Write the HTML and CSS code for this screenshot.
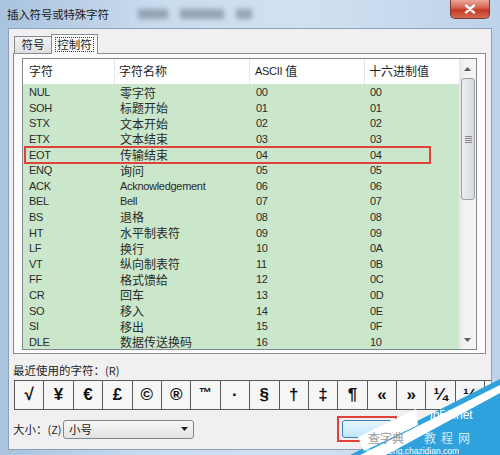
FILE: index.html
```html
<!DOCTYPE html>
<html lang="zh-CN">
<head>
<meta charset="utf-8">
<title>插入符号或特殊字符</title>
<link rel="stylesheet" href="styles.css">
</head>
<body>
<div class="window">
  <div class="titlebar">
    <span class="title">插入符号或特殊字符</span>
    <span class="smudge s1"></span>
    <span class="smudge s2"></span>
    <span class="smudge s3"></span>
    <div class="close">
      <svg width="14" height="10" viewBox="0 0 14 10"><path d="M3 1.5 L11 8.5 M11 1.5 L3 8.5" stroke="#fff" stroke-width="2.4" stroke-linecap="round"/></svg>
    </div>
  </div>
  <div class="client">
    <div class="tabs">
      <div class="tab">符号</div>
      <div class="tab active"><span class="focus">控制符</span></div>
    </div>
    <div class="panel">
      <div class="list">
        <div class="table">
          <div class="row head">
            <div class="c c1">字符</div>
            <div class="c c2">字符名称</div>
            <div class="c c3"><span class="lat">ASCII</span> 值</div>
            <div class="c c4">十六进制值</div>
          </div>
          <div class="rows">
            <div class="row"><div class="c c1 lat">NUL</div><div class="c c2">零字符</div><div class="c c3 lat">00</div><div class="c c4 lat">00</div></div>
            <div class="row"><div class="c c1 lat">SOH</div><div class="c c2">标题开始</div><div class="c c3 lat">01</div><div class="c c4 lat">01</div></div>
            <div class="row"><div class="c c1 lat">STX</div><div class="c c2">文本开始</div><div class="c c3 lat">02</div><div class="c c4 lat">02</div></div>
            <div class="row"><div class="c c1 lat">ETX</div><div class="c c2">文本结束</div><div class="c c3 lat">03</div><div class="c c4 lat">03</div></div>
            <div class="row"><div class="c c1 lat">EOT</div><div class="c c2">传输结束</div><div class="c c3 lat">04</div><div class="c c4 lat">04</div></div>
            <div class="row"><div class="c c1 lat">ENQ</div><div class="c c2">询问</div><div class="c c3 lat">05</div><div class="c c4 lat">05</div></div>
            <div class="row"><div class="c c1 lat">ACK</div><div class="c c2 lat">Acknowledgement</div><div class="c c3 lat">06</div><div class="c c4 lat">06</div></div>
            <div class="row"><div class="c c1 lat">BEL</div><div class="c c2 lat">Bell</div><div class="c c3 lat">07</div><div class="c c4 lat">07</div></div>
            <div class="row"><div class="c c1 lat">BS</div><div class="c c2">退格</div><div class="c c3 lat">08</div><div class="c c4 lat">08</div></div>
            <div class="row"><div class="c c1 lat">HT</div><div class="c c2">水平制表符</div><div class="c c3 lat">09</div><div class="c c4 lat">09</div></div>
            <div class="row"><div class="c c1 lat">LF</div><div class="c c2">换行</div><div class="c c3 lat">10</div><div class="c c4 lat">0A</div></div>
            <div class="row"><div class="c c1 lat">VT</div><div class="c c2">纵向制表符</div><div class="c c3 lat">11</div><div class="c c4 lat">0B</div></div>
            <div class="row"><div class="c c1 lat">FF</div><div class="c c2">格式馈给</div><div class="c c3 lat">12</div><div class="c c4 lat">0C</div></div>
            <div class="row"><div class="c c1 lat">CR</div><div class="c c2">回车</div><div class="c c3 lat">13</div><div class="c c4 lat">0D</div></div>
            <div class="row"><div class="c c1 lat">SO</div><div class="c c2">移入</div><div class="c c3 lat">14</div><div class="c c4 lat">0E</div></div>
            <div class="row"><div class="c c1 lat">SI</div><div class="c c2">移出</div><div class="c c3 lat">15</div><div class="c c4 lat">0F</div></div>
            <div class="row"><div class="c c1 lat">DLE</div><div class="c c2">数据传送换码</div><div class="c c3 lat">16</div><div class="c c4 lat">10</div></div>
          </div>
        </div>
        <div class="scrollbar">
          <div class="arrow up">
            <svg width="7" height="4" viewBox="0 0 7 4"><path d="M0 4 L3.5 0 L7 4 Z" fill="#5c5c5c"/></svg>
          </div>
          <div class="track">
            <div class="thumb"><span class="grip"></span></div>
          </div>
          <div class="arrow down">
            <svg width="7" height="4" viewBox="0 0 7 4"><path d="M0 0 L3.5 4 L7 0 Z" fill="#5c5c5c"/></svg>
          </div>
        </div>
        <div class="redbox"></div>
      </div>
    </div>
    <div class="recent-label">最近使用的字符：<span class="key">(R)</span></div>
    <div class="recent">
      <div class="cell">√</div>
      <div class="cell">¥</div>
      <div class="cell">€</div>
      <div class="cell">£</div>
      <div class="cell">©</div>
      <div class="cell">®</div>
      <div class="cell tm">™</div>
      <div class="cell">·</div>
      <div class="cell">§</div>
      <div class="cell">†</div>
      <div class="cell">‡</div>
      <div class="cell">¶</div>
      <div class="cell">«</div>
      <div class="cell">»</div>
      <div class="cell">¼</div>
      <div class="cell">½</div>
      <div class="cell"></div>
    </div>
    <div class="bottom">
      <span class="size-label">大小：<span class="key">(Z)</span></span>
      <div class="select">
        <span>小号</span>
        <svg width="7" height="4" viewBox="0 0 7 4"><path d="M0 0 L3.5 4 L7 0 Z" fill="#222"/></svg>
      </div>
      <div class="btn-mark"><div class="btn"></div></div>
    </div>
  </div>
  <svg class="watermark" width="150" height="80" viewBox="0 0 150 80">
    <polygon points="0,80 150,4 150,80" fill="#2fa2de"/>
    <polygon points="10,80 150,10 150,18 36,80" fill="#ffffff"/>
    <polygon points="8,62 66,34 68,50 14,76" fill="#ffffff"/>
    <text x="80" y="44" fill="#ffffff" font-family="Liberation Sans, sans-serif" font-size="12">jb51.net</text>
    <text x="18" y="68" fill="#9a9a9a" font-family="Noto Sans CJK SC, sans-serif" font-size="12">查字典</text>
    <text x="74" y="68" fill="#d4eaf7" font-family="Noto Sans CJK SC, sans-serif" font-size="12" letter-spacing="5">教程网</text>
    <text x="16" y="79" fill="#ffffff" font-family="Liberation Sans, sans-serif" font-size="8.5">jiaocheng.chazidian.com</text>
  </svg>
</div>
</body>
</html>
```
FILE: styles.css
```css
* { box-sizing: border-box; }
html, body { margin: 0; padding: 0; }
body {
  width: 500px;
  height: 455px;
  overflow: hidden;
  font-family: "Noto Sans CJK SC", "Liberation Sans", sans-serif;
  font-size: 12px;
  color: #222;
}
.window {
  position: relative;
  width: 500px;
  height: 455px;
  background: linear-gradient(90deg, #a9c3de 0%, #c9dbee 30%, #d2e1f1 60%, #bcd3ea 100%);
  display: flex;
  flex-direction: column;
}
.titlebar {
  position: relative;
  height: 28px;
  flex: none;
  display: flex;
  align-items: center;
  padding-left: 7px;
}
.title {
  font-size: 11.5px;
  color: #1a1a1a;
  letter-spacing: -0.2px;
}
.smudge {
  position: absolute;
  top: 9px;
  height: 10px;
  background: #7d8b99;
  filter: blur(2.5px);
  opacity: 0.7;
}
.s1 { left: 138px; width: 30px; }
.s2 { left: 180px; width: 44px; }
.s3 { left: 236px; width: 16px; }
.close {
  position: absolute;
  right: 10px;
  top: 0;
  width: 40px;
  height: 19px;
  border: 1px solid #7a3a33;
  border-top: none;
  border-radius: 0 0 5px 5px;
  background: linear-gradient(180deg, #e9a79a 0%, #d4604e 45%, #c23a25 55%, #d76b53 100%);
  display: flex;
  align-items: center;
  justify-content: center;
}
.client {
  margin: 0 8px;
  height: 422px;
  background: #f0f0f0;
  border: 1px solid #8c9fb6;
  padding: 4px 0 0 4px;
  display: flex;
  flex-direction: column;
}
.tabs {
  display: flex;
  align-items: flex-end;
  height: 20px;
  padding-left: 1px;
}
.tab {
  height: 17px;
  width: 38px;
  border: 1px solid #898c95;
  border-bottom: none;
  background: linear-gradient(180deg, #f2f2f2, #dedede);
  display: flex;
  align-items: center;
  justify-content: center;
  font-size: 11.5px;
  line-height: 1;
  color: #222;
}
.tab.active {
  height: 20px;
  width: 47px;
  background: #fcfcfc;
  margin-left: -1px;
  position: relative;
  top: 1px;
  z-index: 2;
}
.focus {
  border: 1px dotted #333;
  padding: 0 1px;
  line-height: 13px;
}
.panel {
  width: 473px;
  height: 301px;
  border: 1px solid #898c95;
  background: #fcfcfc;
  padding: 4px 7px 3px 8px;
}
.list {
  position: relative;
  width: 455px;
  height: 292px;
  border: 1px solid #828790;
  background: #fff;
  display: flex;
}
.table {
  width: 436px;
  display: flex;
  flex-direction: column;
}
.row {
  display: flex;
  height: 15.6px;
  align-items: center;
}
.row.head {
  height: 25px;
  background: #fff;
  color: #1e1e1e;
}
.rows {
  background: #cbe7cb;
  color: #2a2a2a;
  flex: 1;
}
.rows .row { padding-top: 2px; }
.c {
  padding-left: 6px;
  white-space: nowrap;
  line-height: 1;
  height: 100%;
  display: flex;
  align-items: center;
}
.c1 { width: 92px; }
.c2 { width: 135px; padding-left: 5px; }
.c3 { width: 115px; }
.c4 { width: 94px; padding-left: 5px; }
.head .c1, .head .c2, .head .c3 { border-right: 1px solid #e4e6ea; }
.head .c2 { padding-left: 4px; }
.head .c3 { padding-left: 5px; }
.head .c4 { padding-left: 4px; }
.lat {
  font-family: "Liberation Sans", sans-serif;
  font-size: 11px;
  letter-spacing: -0.3px;
}
.head .lat { margin-right: 3px; }
.scrollbar {
  width: 17px;
  background: linear-gradient(90deg, #e6e6e6, #f4f4f4 40%, #f4f4f4);
  display: flex;
  flex-direction: column;
}
.arrow {
  height: 18px;
  display: flex;
  align-items: center;
  justify-content: center;
}
.arrow.up { padding-top: 2px; }
.track {
  flex: 1;
  padding: 1px 1px 0 2px;
}
.thumb {
  height: 122px;
  border: 1px solid #9ca0a6;
  border-radius: 3px;
  background: linear-gradient(90deg, #ededed, #e2e3e5 50%, #d6d8db);
  display: flex;
  align-items: center;
  justify-content: center;
}
.grip {
  width: 7px;
  height: 7px;
  background: repeating-linear-gradient(180deg, #8a8a8a 0 1px, transparent 1px 2px);
}
.redbox {
  position: absolute;
  left: 1px;
  top: 87px;
  width: 407px;
  height: 18px;
  border: 2px solid #e2403a;
}
.recent-label {
  margin-top: 9px;
  height: 14px;
  line-height: 14px;
  font-size: 11.5px;
  color: #1e1e1e;
}
.key {
  font-size: 11px;
}
.recent {
  margin-top: 3px;
  margin-left: 1px;
  height: 30px;
  display: flex;
  overflow: hidden;
  border-top: 1px solid #5b5b5b;
  border-bottom: 1px solid #5b5b5b;
  border-left: 1px solid #5b5b5b;
}
.cell {
  flex: none;
  width: 29.4px;
  height: 28px;
  border-right: 1px solid #5b5b5b;
  background: #f6f6f6;
  display: flex;
  align-items: center;
  justify-content: center;
  font-family: "Liberation Sans", sans-serif;
  font-size: 17px;
  font-weight: bold;
  color: #111;
}
.cell.tm { font-size: 13px; align-items: flex-start; padding-top: 4px; }
.bottom {
  margin-top: 9px;
  display: flex;
  align-items: center;
  height: 20px;
}
.size-label {
  font-size: 11.5px;
  color: #1e1e1e;
  width: 50px;
}
.select {
  width: 131px;
  height: 19px;
  border: 1px solid #7e8693;
  border-radius: 3px;
  background: linear-gradient(180deg, #f6f6f6, #e3e3e3);
  display: flex;
  align-items: center;
  justify-content: space-between;
  padding: 0 5px 0 5px;
  font-size: 11.5px;
}
.btn-mark {
  margin-left: 143px;
  width: 60px;
  height: 26px;
  border: 2px solid #e2403a;
  padding: 2px 3px;
}
.btn {
  height: 100%;
  border: 1px solid #3c7fb1;
  border-radius: 3px;
  background: linear-gradient(180deg, #eaf6fd, #bee6fd);
}
.watermark {
  position: absolute;
  right: 0;
  bottom: 0;
}
```
